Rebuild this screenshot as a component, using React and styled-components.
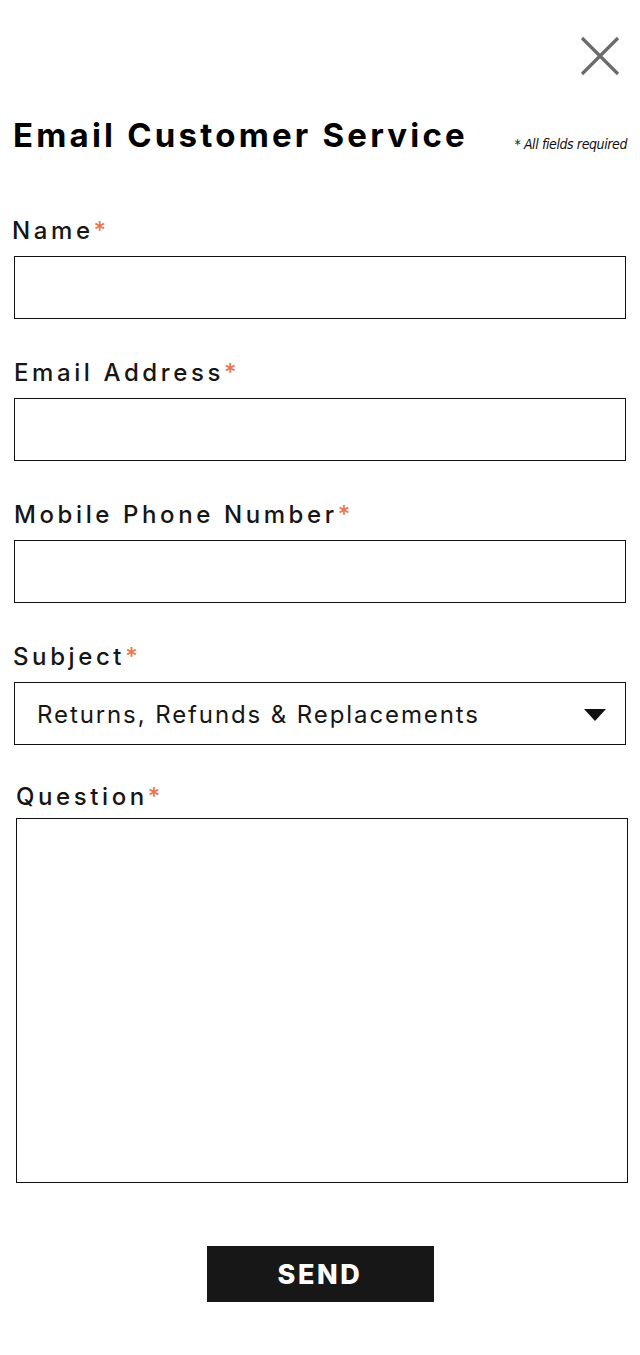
import styled, { createGlobalStyle } from "styled-components";

const GlobalStyle = createGlobalStyle`
  html, body {
    margin: 0;
    padding: 0;
    background: #ffffff;
  }
  body {
    font-family: Inter, "Noto Sans", "DejaVu Sans", sans-serif;
    color: #141414;
  }
  * {
    box-sizing: border-box;
  }
`;

const Page = styled.div`
  width: 640px;
  min-height: 1355px;
  padding: 0 14px 0 14px;
`;

const TopBar = styled.div`
  display: flex;
  justify-content: flex-end;
  padding-top: 36px;
  padding-right: 6px;
`;

const CloseButton = styled.button`
  width: 40px;
  height: 40px;
  padding: 0;
  border: none;
  background: none;
  cursor: pointer;
`;

const Header = styled.div`
  display: flex;
  align-items: baseline;
  justify-content: space-between;
  margin-top: 38px;
`;

const Title = styled.h1`
  margin: 0 0 0 -1px;
  font-size: 33px;
  line-height: 42px;
  font-weight: 700;
  letter-spacing: 3.2px;
  color: #000;
`;

const Note = styled.span`
  font-family: "DejaVu Sans Condensed", "DejaVu Sans", sans-serif;
  font-stretch: condensed;
  font-style: italic;
  font-size: 14px;
  letter-spacing: -0.4px;
  color: #111;
  margin-right: -1px;
  position: relative;
  top: 2px;
`;

const Form = styled.form`
  display: flex;
  flex-direction: column;
  margin-top: 58px;
`;

const Field = styled.div`
  display: flex;
  flex-direction: column;
  gap: ${(p) => p.$gap ?? 8}px;
  margin-top: ${(p) => p.$top ?? 37}px;

  &:first-child {
    margin-top: 0;
  }
`;

const Label = styled.label`
  font-size: 24px;
  line-height: 34px;
  font-weight: 500;
  letter-spacing: 3.6px;
  color: #161616;
  margin-left: ${(p) => p.$shift || 0}px;
`;

const Star = styled.span`
  color: #e8774d;
  letter-spacing: 0;
`;

const Input = styled.input`
  display: block;
  width: 100%;
  height: 63px;
  border: 1px solid #111;
  border-radius: 0;
  background: #fff;
  padding: 0 20px;
  font-size: 22px;
  outline: none;
`;

const SelectBox = styled.div`
  display: flex;
  align-items: center;
  justify-content: space-between;
  height: 63px;
  border: 1px solid #111;
  padding: 2px 19px 0 22px;
  font-size: 24px;
  letter-spacing: 1.9px;
  color: #161616;
`;

const TextArea = styled.textarea`
  display: block;
  width: 100%;
  height: 365px;
  border: 1px solid #111;
  border-radius: 0;
  resize: none;
  outline: none;
  margin-left: 2px;
`;

const ButtonRow = styled.div`
  display: flex;
  justify-content: center;
  margin-top: 63px;
`;

const SendButton = styled.button`
  width: 227px;
  height: 56px;
  border: none;
  background: #171717;
  color: #fff;
  font-family: Inter, "Noto Sans", sans-serif;
  font-size: 27px;
  font-weight: 800;
  letter-spacing: 2.6px;
  cursor: pointer;
`;

const fields = [
  { label: "Name", shift: -2 },
  { label: "Email Address", shift: 0 },
  { label: "Mobile Phone Number", shift: 0 },
];

function App() {
  return (
    <>
      <GlobalStyle />
      <Page>
        <TopBar>
          <CloseButton aria-label="Close">
            <svg width="40" height="40" viewBox="0 0 40 40">
              <path d="M2 2 L38 38 M38 2 L2 38" stroke="#6b6b6b" strokeWidth="3.2" />
            </svg>
          </CloseButton>
        </TopBar>

        <Header>
          <Title>Email Customer Service</Title>
          <Note>* All fields required</Note>
        </Header>

        <Form>
          {fields.map((f) => (
            <Field key={f.label}>
              <Label $shift={f.shift}>
                {f.label}
                <Star>*</Star>
              </Label>
              <Input type="text" />
            </Field>
          ))}

          <Field>
            <Label $shift={-1}>
              Subject<Star>*</Star>
            </Label>
            <SelectBox>
              <span>Returns, Refunds &amp; Replacements</span>
              <svg width="22" height="12" viewBox="0 0 22 12">
                <path d="M0 0 L22 0 L11 12 Z" fill="#111" />
              </svg>
            </SelectBox>
          </Field>

          <Field $top={35} $gap={4}>
            <Label $shift={2}>
              Question<Star>*</Star>
            </Label>
            <TextArea />
          </Field>
        </Form>

        <ButtonRow>
          <SendButton type="button">SEND</SendButton>
        </ButtonRow>
      </Page>
    </>
  );
}

export default App;
